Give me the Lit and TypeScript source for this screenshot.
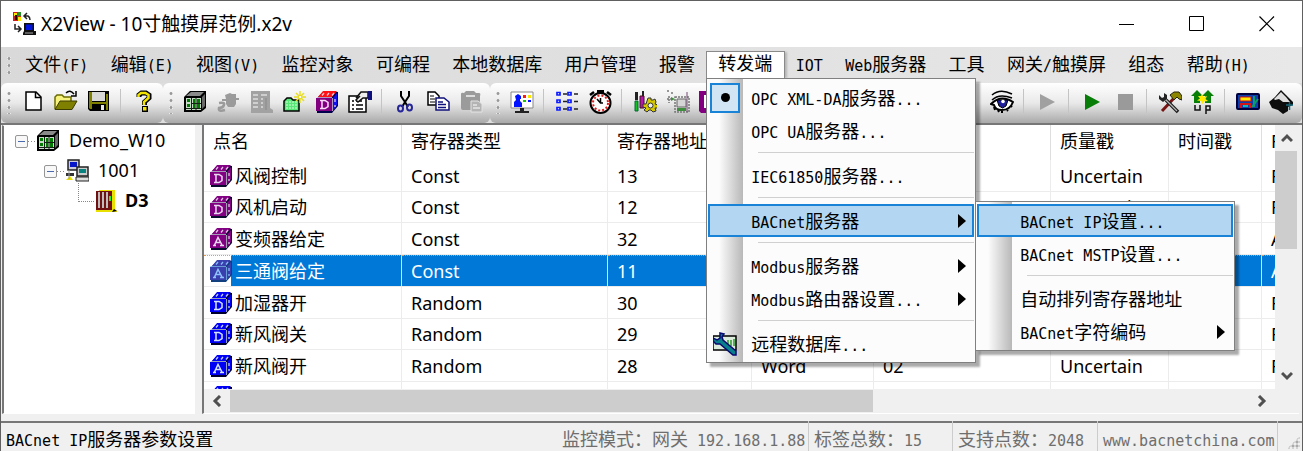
import { LitElement, html, css, svg, nothing, TemplateResult } from "lit";
import { customElement } from "lit/decorators.js";
import { classMap } from "lit/directives/class-map.js";

/** Half-width runs are set in a narrower monospace size so two of them equal one ideograph. */
const mixed = (text: string) =>
  text
    .split(/([\x20-\x7e]+)/)
    .filter((part) => part !== "")
    .map((part) => (/^[\x20-\x7e]/.test(part) ? html`<span class="half">${part}</span>` : part));

const cube = (face: string, letter: "D" | "A", edge = "#0b0b30", ink = "#e8d8f0", top = face, side = face) => svg`
  <path d="M2 8 8 2H23V16L17 23H2Z" fill=${edge}/>
  <path d="M3 7 8 1H22L17 7Z" fill=${top}/>
  <path d="M18 8 22 3V15L18 21Z" fill=${side}/>
  <rect x="1" y="8" width="16" height="13" fill=${face}/>
  <path d="M1 7.5H17M17.5 8V21" stroke=${ink} stroke-width="1" opacity=".7" fill="none"/>
  <path d="M7 5.500 9 3M12 5.500 14 3M17 5.500 19 3M20 9V12M20 15V17" stroke=${ink} stroke-width="1.300" fill="none" opacity=".9"/>
  ${letter === "D"
    ? svg`<path d="M5 10.500H10L13 12.500V16.500L10 18.500H5M7 10.500V18.500" fill="none" stroke=${ink} stroke-width="1.500"/>`
    : svg`<path d="M4 18.500H7M11 18.500H15M5.500 18 9 10.500 13 18M7 15.500H12" fill="none" stroke=${ink} stroke-width="1.500"/>`}`;

const icons: Record<string, TemplateResult> = {
  app: svg`
    <path d="M1 0H9V9H1Z" fill="#d41c1c"/><path d="M2 1H5V4H2ZM6 5H9V9H6Z" fill="#ffe600"/><path d="M6 0H9V4H6Z" fill="#2c8f2c"/><path d="M3 3H5V8H3Z" fill="#111"/>
    <path d="M15 1 12 4 15 7M12 4H16Q18 5 18 8" fill="none" stroke="#222" stroke-width="1.500"/>
    <path d="M3 12V17H9M6 14 9 17 6 20" fill="none" stroke="#222" stroke-width="1.500"/>
    <path d="M12 11H22V19H24V23H11V21L12 19Z" fill="#111"/><path d="M14 12.500H20.500V18H14Z" fill="#0014e0"/><path d="M13 21H21" stroke="#aaa"/>`,
  fresh: svg`<path d="M5 2H15L20 7V20H5Z" fill="#fff" stroke="#000" stroke-width="1.500"/><path d="M14.500 2V7.500H20" fill="none" stroke="#000" stroke-width="1.500"/>`,
  open: svg`<path d="M1 19V7L3 5H8L10 7H17V11" fill="#f6f27c" stroke="#6b6b00" stroke-width="1.500"/><path d="M1 19.500 6 11H23L18 19.500Z" fill="#808000" stroke="#3c3c00"/><path d="M12 3Q16-1 20 4M22 1V6H17" fill="none" stroke="#000" stroke-width="1.500"/>`,
  save: svg`<path d="M1 1H22V21H3L1 19Z" fill="#000"/><path d="M2 2H5V19H3L2 18ZM19 4H21V20H19Z" fill="#808000"/><path d="M5 2H18V11H5Z" fill="#d8d8d8"/><path d="M3 12H20V14H3Z" fill="#808000"/><path d="M14 15H17V20H14Z" fill="#e8e8e8"/>`,
  help: svg`<path d="M7 7V5L9.500 3H14L17 5V8L12.500 12V15" fill="none" stroke="#000" stroke-width="5"/><path d="M10 16H16V22H10Z" fill="#000"/><path d="M6.500 7V5L9 3H13.500L16.500 5V8L12 12V15" fill="none" stroke="#f2e200" stroke-width="2.500"/><path d="M11 17H14.500V20.500H11Z" fill="#f2e200"/>`,
  controller: svg`
    <path d="M1 7 7 1H23V18L18 22H1Z" fill="#000"/>
    <path d="M3 6 8 2H21L17 6Z" fill="#8a8a8a"/>
    <path d="M19 7 22 4V16L19 19Z" fill="#686868"/>
    <rect x="3" y="8" width="15" height="12" fill="#c9dcc9"/>
    <path d="M4 9H7V12H4ZM4 14H7V17H4ZM10 9H12V13H10ZM14 9H17V13H14ZM10 14H12V18H10ZM14 14H17V18H14Z" fill="#007a00"/>
    <path d="M8.500 8V20M13 8V20M9 13.500H18M3 18.500H18" stroke="#142014"/>`,
  plug: svg`<path d="M3 13Q9 12 8 15T3 18Q2 22 9 20" fill="none" stroke="#9b9b9b" stroke-width="2.500"/><path d="M9 5 14 3 16 4H20V8H23V10H20V14L18 17H12L10 14V11H6V9H10Z" fill="#9b9b9b"/>`,
  server: svg`<path d="M2 1H21V18L24 20V23H2Z" fill="#a2a2a2"/><path d="M4 5H9M4 9H9M4 13H9M4 17H9M12 5H18M12 9H14M12 13H14M12 17H14" stroke="#dedede" stroke-width="1.500"/><path d="M17 8V20" stroke="#8a8a8a"/>`,
  folder: svg`<path d="M2 21V11L5 8H9L11 10H17V21Z" fill="#58e878" stroke="#000" stroke-width="1.500"/><path d="M4 12H16M4 15H16M4 18H16" stroke="#d7ffd8" stroke-dasharray="2 1"/><path d="M18 1V13M12 7H24M14 3 22 11M22 3 14 11" stroke="#e8dd22" stroke-width="1.500"/><path d="M17 6H19V8H17Z" fill="#fff"/>`,
  cubeNew: cube("#800080", "D", "#00004c", "#f7dcf7", "#ff1111", "#1111ee"),
  props: svg`<path d="M1 6H18V22H1Z" fill="#fff" stroke="#000" stroke-width="1.500"/><path d="M4 11H6M8 11H14M4 15H6M8 15H15M4 19H6M8 19H15" stroke="#000" stroke-width="1.500"/><path d="M8 8 13 2H20V8H15L10 12 8 10 12 6" fill="#eee" stroke="#111" stroke-width="1.500"/><path d="M20 1H24V10H20Z" fill="#10107c"/>`,
  cut: svg`<path d="M8 1V6L12 12 15 17M16 1V6L12 12 9 17" fill="none" stroke="#000" stroke-width="2"/><ellipse cx="7.500" cy="18.500" rx="2.500" ry="3" fill="none" stroke="#26269a" stroke-width="2"/><ellipse cx="16.500" cy="17.500" rx="2.500" ry="3" fill="none" stroke="#26269a" stroke-width="2"/>`,
  copy: svg`<path d="M2 2H9L13 6V15H2Z" fill="#fff" stroke="#000" stroke-width="1.500"/><path d="M4 6H8M4 9H9M4 12H9" stroke="#000"/><path d="M10 8H18L23 12V20H10Z" fill="#fff" stroke="#10107c" stroke-width="1.500"/><path d="M12 12H17M12 14.500H20M12 17.500H20" stroke="#10107c" stroke-width="1.300"/>`,
  paste: svg`<path d="M2 4Q2 2 5 3L7 1H15L17 3H20Q22 3 21 6V20H4Q2 20 2 18Z" fill="#9b9b9b"/><path d="M7 5H16V7H7Z" fill="#ddd"/><path d="M12 11H19L23 14V22H12Z" fill="#b4b4b4" stroke="#e3e3e3"/><path d="M14 15H18M14 18H21" stroke="#fff"/>`,
  monitor: svg`<path d="M1 2H23V18H1Z" fill="#fff" stroke="#888"/><path d="M5 6 8 4 11 6V9H10V11L12 13V17H4V12L6 10Z" fill="#0012ff"/><path d="M13 5H16V8H13Z" fill="#ff1a1a"/><path d="M18 5H21V8H18Z" fill="#ffe600"/><path d="M13 10H16V12H13Z" fill="#16c800"/><path d="M18 10H21V12H18Z" fill="#0012ff"/><path d="M10 18H14V21H19V23H5V21H10Z" fill="#222"/>`,
  list: svg`<path d="M2 2.500H5V5H2ZM13 2.500H16V5H13ZM2 10H5V12.500H2ZM13 10H16V12.500H13ZM2 17.500H5V20H2ZM13 17.500H16V20H13Z" fill="#fff" stroke="#0d1cff" stroke-width="1.700"/><path d="M8 4H12M19 4H23M8 11.500H12M19 11.500H23M8 19H12M19 19H23" stroke="#222" stroke-width="1.700"/>`,
  clock: svg`<path d="M9 0H16V4H9Z" fill="#000"/><circle cx="12.500" cy="13" r="10" fill="#fff" stroke="#000" stroke-width="2"/><circle cx="12.500" cy="13" r="7.500" fill="none" stroke="#e21b1b" stroke-width="2" stroke-dasharray="2 2"/><path d="M9 9 12.500 13H15M12.500 8V13" fill="none" stroke="#000" stroke-width="1.500"/><path d="M2 5 6 2M23 5 19 2" stroke="#000" stroke-width="2.500"/>`,
  toolkit: svg`<path d="M2 2H5V10H2ZM9 1H11V7H9Z" fill="#222"/><path d="M2 11H5V21H2Z" fill="#16c022" stroke="#063"/><path d="M7 6H11V18H7Z" fill="#b316b3" stroke="#411"/><path d="M14 11 15 8H18V10H20L22 9 23 12 22 14 25 15V18L22 18 23 21 20 22 18 20H16L14 22 11 20 13 18 10 17V14L13 14Z" fill="#d6c800" stroke="#333"/><circle cx="17.500" cy="15.500" r="2.500" fill="#eee" stroke="#333"/>`,
  frame: svg`<path d="M1 1H3M5 3H7M1 9H7M3 6V13M9 7H23V22H9Z" fill="none" stroke="#777" stroke-width="1.500" stroke-dasharray="2 1"/><path d="M11 9H20V17H11Z" fill="#d5d5d5" stroke="#666"/><path d="M5 7 9 9 5 11ZM11 18H20V21H11Z" fill="#3e8e3e"/><path d="M21 2V22" stroke="#774b77"/>`,
  purple: svg`<path d="M0 1H23V23H2L0 21Z" fill="#800080"/><path d="M5 5H18V18H5Z" fill="#fff"/><path d="M8 8V15H14V8Z" fill="#800080"/>`,
  eye: svg`<path d="M2 5Q10-2 22 4" fill="none" stroke="#000" stroke-width="1.500"/><path d="M2 10Q9 3 22 8" fill="none" stroke="#000" stroke-width="1.500"/><path d="M1 14Q11 4 23 12 20 20 12 20 5 20 4 15Z" fill="#fff" stroke="#000" stroke-width="2"/><path d="M7 10H18L16 16 12.500 18 9 16Z" fill="#1d1d9e" stroke="#000"/><circle cx="13" cy="11.500" r="1.800" fill="#fff"/><path d="M4 17 5 20M8 20 9 22M12 21V23M17 20 18 21M21 16 22 17" stroke="#000" stroke-width="2"/>`,
  playOff: svg`<path d="M5 4 20 12 5 20Z" fill="#a0a0a0"/>`,
  play: svg`<path d="M5 4 20 12 5 20Z" fill="#087d08"/>`,
  stop: svg`<path d="M5 4H20V20H5Z" fill="#9a9a9a"/>`,
  hammer: svg`<path d="M4 21 17 7" stroke="#781414" stroke-width="3"/><path d="M12 5 16 2H21L24 6V10L21 9 19 7 16 10Z" fill="#8b8500" stroke="#221"/><path d="M8 10 20 22" stroke="#1b1b1b" stroke-width="3.500"/><path d="M8 10 19 21" stroke="#b6b6b6" stroke-width="1.200"/><path d="M1 5V9L5 12L9 9V5L6 3V7L4 8Z" fill="#222"/>`,
  up: svg`<path d="M6 0 12 6H9V13H3V6H0ZM17 0 23 6H20V13H14V6H11Z" fill="#088008"/><path d="M11 4 12.500 7 16 6 14.500 9 17 11 13 11.500 11.500 14 10 11 6 10.500 9 8.500 7 6H10Z" fill="#ffea00"/><path d="M4 15V20H9V15M15 24V16H19V20H15" fill="none" stroke="#111" stroke-width="1.500"/>`,
  panel: svg`<rect x="0" y="3" width="24" height="17" rx="2" fill="#00003c"/><path d="M2 5H22V18H2Z" fill="#0b3fae"/><path d="M4 7H15V11H4Z" fill="#ffe800" stroke="#c11"/><path d="M4 13H15V18H13V15H6V18H4Z" fill="#d61414"/><path d="M7 16H12" stroke="#17b6b6" stroke-width="2"/><path d="M18 6V17M16 17 22 9" stroke="#0d9a6a" stroke-width="2"/>`,
  spade: svg`<path d="M12 0 17 5 24 12V15L19 17V21L14 24 9 20 3 18 0 12 6 7Z" fill="#0d0d0d"/><path d="M12 2 17 7 21 12H14L10 9 6 10 5 9Z" fill="#dedede"/><path d="M17 15H24M20.500 12V20" stroke="#176678" stroke-width="1.500"/>`,
  database: svg`<path d="M0 4H23V18H0Z" fill="#dcecdc" stroke="#000" stroke-width="1.500"/><path d="M15 8V12M18 8V14M21 7V14" stroke="#2e9b2e" stroke-width="1.500"/><path d="M7 1 11 2 9 5 10 8 23 19V23H20L7 12H3L0 9 0 6 4 8 7 6Z" fill="#08808c" stroke="#070770" stroke-width="1.500"/>`,
  computers: svg`<path d="M3 1H14V11H3Z" fill="#ccd" stroke="#222" stroke-width="1.500"/><path d="M5 3H12V8H5Z" fill="#0616c8"/><path d="M12 8H23V17H12Z" fill="#ccc" stroke="#222" stroke-width="1.500"/><path d="M14 10H21V14H14Z" fill="#07827e"/><path d="M11 18H24V22H11Z" fill="#ddd" stroke="#222"/><path d="M1 14H9V17H1Z" fill="#333"/><path d="M1 21 5 17 8 21Z" fill="#e9df00"/><path d="M4 11V20" stroke="#999"/>`,
  rack: svg`<path d="M4 1H20V20L22 22V23H1V20Z" fill="#e7e000"/><path d="M1 2H17V21H1Z" fill="#701010"/><path d="M3 3H5V19H3ZM7 3H9V19H7ZM11 3H13V19H11Z" fill="#bdbdbd"/><path d="M14 7H16V12H14Z" fill="#22f022"/><path d="M19 20 22 22 17 23Z" fill="#000"/>`,
  D1: cube("#820082", "D"),
  A1: cube("#820082", "A"),
  A0: cube("#3a3fae", "A", "#123f7e", "#8fc3ff"),
  D2: cube("#0000f4", "D", "#000030", "#d4e4ff"),
  A2: cube("#0000f4", "A", "#000030", "#d4e4ff"),
};

const icon = (name: string) =>
  html`<svg class="icon" viewBox="0 0 24 24" width="24" height="24" aria-hidden="true">${icons[name]}</svg>`;

const chevron = (d: string) =>
  html`<svg viewBox="0 0 12 12" width="12" height="12" aria-hidden="true"><path d=${d} fill="none" stroke="#505050" stroke-width="3"/></svg>`;

type Entry = { label: string; icon?: string; radio?: boolean; open?: boolean; sub?: Entry[] } | null;

const bacnet: Entry[] = [
  { label: "BACnet IP设置...", open: true },
  { label: "BACnet MSTP设置..." },
  null,
  { label: "自动排列寄存器地址" },
  { label: "BACnet字符编码", sub: [] },
];

const forwarding: Entry[] = [
  { label: "OPC XML-DA服务器...", radio: true },
  { label: "OPC UA服务器..." },
  null,
  { label: "IEC61850服务器..." },
  null,
  { label: "BACnet服务器", open: true, sub: bacnet },
  null,
  { label: "Modbus服务器", sub: [] },
  { label: "Modbus路由器设置...", sub: [] },
  null,
  { label: "远程数据库...", icon: "database" },
];

const menus = ["文件(F)", "编辑(E)", "视图(V)", "监控对象", "可编程", "本地数据库", "用户管理", "报警", "转发端", "IOT", "Web服务器", "工具", "网关/触摸屏", "组态", "帮助(H)"];

const tools: Record<string, string> = {
  fresh: "新建", open: "打开", save: "保存", help: "帮助", controller: "网关", plug: "通道", server: "设备", folder: "组", cubeNew: "点", props: "属性",
  cut: "剪切", copy: "复制", paste: "粘贴", monitor: "监控", list: "列表", clock: "定时", toolkit: "工具", frame: "画面", purple: "数据",
  eye: "查看", playOff: "继续", play: "运行", stop: "停止", hammer: "设置", up: "上传", panel: "触摸屏", spade: "下载",
};

const points = [
  ["D1", "风阀控制", "Const", "13", "", "", "Uncertain", "", "R"],
  ["D1", "风机启动", "Const", "12", "", "", "Uncertain", "", "R"],
  ["A1", "变频器给定", "Const", "32", "", "", "", "", "A"],
  ["A0", "三通阀给定", "Const", "11", "", "", "", "", "A"],
  ["D2", "加湿器开", "Random", "30", "", "", "", "", "R"],
  ["D2", "新风阀关", "Random", "29", "", "", "", "", "R"],
  ["A2", "新风阀开", "Random", "28", "Word", "02", "Uncertain", "", "R"],
  ["D2", "", "", "", "", "", "", "", ""],
];

@customElement("app-root")
export class AppRoot extends LitElement {
  static styles = css`
    :host {
      display: flex;
      flex-direction: column;
      height: 100vh;
      box-sizing: border-box;
      overflow: hidden;
      border: 1px solid #606060;
      border-bottom: 0;
      background: #f0f0f0;
      color: #000;
      font: 18px/24px "Noto Sans", "Noto Sans CJK SC", sans-serif;
    }
    button {
      font: inherit;
      color: inherit;
      background: none;
      border: 0;
      padding: 0;
      margin: 0;
    }
    .icon { display: block; flex: none; }
    .song { font-family: "DejaVu Sans Mono", "Noto Sans CJK SC", monospace; }
    .half { font-size: 15px; white-space: pre; }

    .title { display: flex; align-items: center; height: 46px; background: #fff; padding-left: 11px; flex: none; }
    .title h1 { flex: 1; margin: 0 0 0 5px; font-size: 19px; font-weight: 400; }
    .title button { width: 70px; height: 46px; display: grid; place-items: center; }

    .menubar { display: flex; height: 36px; flex: none; background: linear-gradient(90deg, #d9d9d9, #e8e8e8); padding-right: 41px; }
    .grip { width: 4px; margin: 8px 0 8px 6px; background: radial-gradient(circle, #999 1px, #fff 2px, transparent 2px) 0 0 / 4px 7px; flex: none; }
    .menus { display: flex; flex: 1; list-style: none; margin: 0; padding: 0 0 0 3px; max-width: 1280px; }
    .menus > li { flex: 1 1 auto; display: flex; position: relative; }
    .menus > li > button { flex: 1; height: 36px; white-space: nowrap; }
    .menus > .active { z-index: 2; }
    .menus > .active > button { background: #fff; border: 1px solid #8a8a8a; border-bottom: 0; margin-top: 4px; height: 28px; line-height: 24px; padding-bottom: 3px; box-shadow: 3px 0 2px -1px #0003; }

    .popup {
      position: absolute;
      top: 100%;
      left: 0;
      width: 266px;
      margin: -5px 0 0;
      padding: 2px 1px;
      list-style: none;
      border: 1px solid #808080;
      background: linear-gradient(90deg, #fcfcfc 12px, #b8b8b8 36px, #fcfcfc 36px);
      box-shadow: 4px 4px 2px #0005;
    }
    .popup li { position: relative; }
    .popup .line { height: 1px; margin: 5px 0 6px 50px; background: #d0d0d0; }
    .popup .entry { display: flex; align-items: center; width: 100%; height: 33px; box-sizing: border-box; border: 2px solid transparent; text-align: left; white-space: nowrap; }
    .popup .entry.open { background: #b3d7f2; border-color: #1883d7; }
    .mark { width: 41px; flex: none; }
    .mark .icon { margin-left: 3px; }
    .radio { display: grid; place-items: center; width: 26px; height: 26px; border: 2px solid #1883d7; background: #d2e5f5; }
    .dot { width: 9px; height: 9px; border-radius: 50%; background: #000; }
    .label { flex: 1; padding-top: 3px; }
    .arrow { margin-right: 6px; border: 7px solid transparent; border-left: 8px solid #000; border-right: 0; }
    .nested { top: -3px; left: 100%; width: 256px; margin: 0 0 0 1px; }

    .toolbars { display: flex; height: 40px; flex: none; background: #dedede; border-bottom: 2px solid #777; }
    .toolbar { display: flex; align-items: center; box-sizing: border-box; padding-right: 3px; border-radius: 6px; background: linear-gradient(#fff, #e9e9e9 50%, #a9a9a9); }
    .toolbar .grip { margin: 0 5px 2px 6px; height: 24px; }
    .toolbar.wide { flex: 1; padding-right: 5px; }
    .toolbar button { width: 33px; height: 33px; display: grid; place-items: center; margin-bottom: 2px; }
    .rule { width: 1px; height: 24px; margin: 0 6px 4px 5px; background: #c4c4c4; }
    .push { flex: 1; }

    .body { display: flex; gap: 7px; flex: 1; min-height: 0; padding: 0 3px 7px 1px; }
    .tree { width: 193px; flex: none; box-sizing: border-box; background: #fff; border: 1px solid #fff; border-left: 2px solid #777; }
    .tree ul { margin: 0; padding: 0; list-style: none; }
    .node { display: flex; align-items: center; height: 30px; }
    .level1 { padding-left: 11px; }
    .level2 { padding-left: 40px; }
    .level3 { padding-left: 74px; font-weight: 700; }
    .box { width: 13px; height: 13px; box-sizing: border-box; border: 1px solid #969696; border-radius: 2px; background: linear-gradient(#4a6ab0, #4a6ab0) center / 7px 1px no-repeat #f8f8f8; }
    .twig { width: 8px; height: 1px; background: repeating-linear-gradient(90deg, #888 0 1px, transparent 1px 3px); }
    .level3 .twig { width: 15px; height: 18px; margin: -17px 1px 0 0; background: none; border-left: 1px dotted #888; border-bottom: 1px dotted #888; }
    .node .name { margin-left: 9px; padding-bottom: 3px; }
    .level3 .name { margin-left: 6px; }

    .grid { flex: 1; min-width: 0; display: grid; grid-template: minmax(0, 1fr) 24px / minmax(0, 1fr) 24px; border-left: 2px solid #777; border-bottom: 1px solid #fff; }
    .view { overflow: hidden; background: #fff; }
    table { table-layout: fixed; width: 1178px; border-collapse: separate; border-spacing: 0; }
    .c1 { width: 198px; } .c2 { width: 206px; } .c3 { width: 144px; } .c4 { width: 122px; }
    .c5 { width: 177px; } .c6 { width: 118px; } .c7 { width: 93px; } .c8 { width: 120px; }
    th, td { box-sizing: border-box; padding: 0 0 0 9px; text-align: left; font-weight: 400; white-space: nowrap; border-right: 1px solid #ececec; line-height: 24px; }
    th { height: 35px; padding-bottom: 3px; border-right-color: #dedede; }
    td { height: 31px; border-bottom: 1px solid #ececec; }
    tr:nth-child(odd) td { height: 32px; }
    .point { padding-left: 5px; }
    .point div { display: flex; align-items: center; }
    .point span { flex: 1; height: 30px; line-height: 30px; padding-left: 2px; }
    .chosen td { background: #0078d7; color: #fff; border-right-color: #cfe4f6; border-top: 1px dotted #e59b50; }
    .chosen .point { background: linear-gradient(90deg, #fff 27px, #0078d7 27px); }
    .track { display: flex; align-items: center; }
    .down { flex-direction: column; }
    .cap { width: 26px; height: 26px; display: grid; place-items: center; flex: none; }
    .thumb { background: #cdcdcd; }
    .down .thumb { width: 22px; height: 98px; margin-right: 2px; }
    .across .thumb { width: 60%; height: 22px; }
    .gap { flex: 1; }

    .status { display: flex; align-items: center; height: 28px; flex: none; border-top: 2px solid #777; padding: 0 2px 0 5px; color: #6e6e6e; white-space: nowrap; }
    .hint { flex: 1; color: #000; padding-top: 7px; }
    .cell { box-sizing: border-box; padding: 7px 0 0 5px; border-right: 1px solid #ccc; }
    .mode { width: 252px; } .tags { width: 144px; } .max { width: 145px; } .site { width: 180px; }
    .status a { color: inherit; text-decoration: none; }
    .size { align-self: end; margin: 0 0 2px 9px; width: 13px; height: 13px; clip-path: polygon(100% 0, 100% 100%, 0 100%); background: radial-gradient(circle, #aaa 1px, transparent 2px) 0 0 / 4px 4px; }
  `;

  private entries(list: Entry[], cls = ""): TemplateResult {
    return html`<ul class="popup ${cls}" role="menu">
      ${list.map((e) =>
        e === null
          ? html`<li class="line" role="separator"></li>`
          : html`<li>
              <button role="menuitem" class=${classMap({ entry: true, open: !!e.open })}>
                <span class="mark">${e.radio ? html`<span class="radio"><span class="dot"></span></span>` : e.icon ? icon(e.icon) : nothing}</span>
                <span class="label">${mixed(e.label)}</span>
                ${e.sub ? html`<span class="arrow"></span>` : nothing}
              </button>
              ${e.sub?.length ? this.entries(e.sub, "nested") : nothing}
            </li>`
      )}
    </ul>`;
  }

  private tool(names: string) {
    return names.split(" ").map((n) =>
      n === "|" ? html`<span class="rule"></span>` : n === ">" ? html`<span class="push"></span>` : html`<button aria-label=${tools[n]}>${icon(n)}</button>`
    );
  }

  render() {
    return html`
      <header class="title">
        ${icon("app")}
        <h1>X2View - 10寸触摸屏范例.x2v</h1>
        <button aria-label="最小化"><svg width="16" height="16"><path d="M0 8.500H15" stroke="#000"/></svg></button>
        <button aria-label="最大化"><svg width="16" height="16"><path d="M.5.5H14.500V14.500H.5Z" fill="none" stroke="#000"/></svg></button>
        <button aria-label="关闭"><svg width="16" height="16"><path d="M.5.5 15 15M15 .5.5 15" stroke="#000" stroke-width="1.200"/></svg></button>
      </header>

      <nav class="menubar song">
        <span class="grip"></span>
        <ul class="menus">
          ${menus.map((m) => {
            const active = m === "转发端";
            return html`<li class=${classMap({ active })}>
              <button>${mixed(m)}</button>
              ${active ? this.entries(forwarding) : nothing}
            </li>`;
          })}
        </ul>
      </nav>

      <div class="toolbars">
        <div class="toolbar"><span class="grip"></span>${this.tool("fresh open save | help")}</div>
        <div class="toolbar"><span class="grip"></span>${this.tool("controller plug server folder cubeNew props | cut copy paste")}</div>
        <div class="toolbar wide">
          <span class="grip"></span>${this.tool("monitor | list clock | toolkit frame purple > eye | playOff | play stop | hammer up | panel spade")}
        </div>
      </div>

      <main class="body">
        <nav class="tree">
          <ul>
            <li class="node level1"><span class="box"></span><span class="twig"></span>${icon("controller")}<span class="name">Demo_W10</span></li>
            <li class="node level2"><span class="box"></span><span class="twig"></span>${icon("computers")}<span class="name">1001</span></li>
            <li class="node level3"><span class="twig"></span>${icon("rack")}<span class="name">D3</span></li>
          </ul>
        </nav>
        <section class="grid">
          <div class="view">
            <table>
              <colgroup>${[1, 2, 3, 4, 5, 6, 7, 8].map((n) => html`<col class="c${n}" />`)}</colgroup>
              <thead>
                <tr>${["点名", "寄存器类型", "寄存器地址", "", "", "质量戳", "时间戳", "R"].map((h) => html`<th>${h}</th>`)}</tr>
              </thead>
              <tbody>
                ${points.map(
                  ([kind, name, ...rest]) => html`<tr class=${classMap({ chosen: kind === "A0" })}>
                    <td class="point"><div>${icon(kind)}<span>${name}</span></div></td>
                    ${rest.map((v) => html`<td>${v}</td>`)}
                  </tr>`
                )}
              </tbody>
            </table>
          </div>
          <div class="track down">
            <span class="cap">${chevron("M1 9 6 4 11 9")}</span><span class="thumb"></span><span class="gap"></span><span class="cap">${chevron("M1 3 6 8 11 3")}</span>
          </div>
          <div class="track across">
            <span class="cap">${chevron("M9 1 4 6 9 11")}</span><span class="thumb"></span><span class="gap"></span><span class="cap">${chevron("M3 1 8 6 3 11")}</span>
          </div>
        </section>
      </main>

      <footer class="status song">
        <span class="hint">${mixed("BACnet IP服务器参数设置")}</span>
        <span class="cell mode">${mixed("监控模式：网关 192.168.1.88")}</span>
        <span class="cell tags">${mixed("标签总数：15")}</span>
        <span class="cell max">${mixed("支持点数：2048")}</span>
        <span class="cell site"><a href="#site">${mixed("www.bacnetchina.com")}</a></span>
        <span class="size"></span>
      </footer>
    `;
  }
}
